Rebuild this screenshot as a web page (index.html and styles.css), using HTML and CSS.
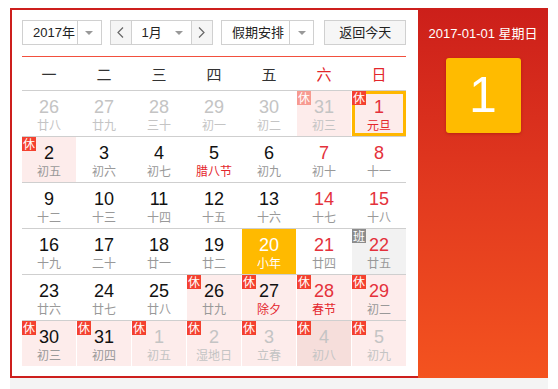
FILE: index.html
```html
<!DOCTYPE html>
<html lang="zh-CN">
<head>
<meta charset="utf-8">
<title>万年历</title>
<link rel="stylesheet" href="styles.css">
</head>
<body>
<div class="page">
  <div class="calendar">
    <div class="main">
      <div class="controls">
        <div class="select year">
          <span class="select-text">2017年</span>
          <span class="select-arrow"><i class="tri"></i></span>
        </div>
        <div class="month-group">
          <span class="nav-btn"><svg width="7" height="11" viewBox="0 0 7 11"><polyline points="6,0.5 1,5.5 6,10.5" fill="none" stroke="#666" stroke-width="1.2"/></svg></span>
          <div class="month-select">
            <span class="select-text">1月</span>
            <i class="tri"></i>
          </div>
          <span class="nav-btn"><svg width="7" height="11" viewBox="0 0 7 11"><polyline points="1,0.5 6,5.5 1,10.5" fill="none" stroke="#666" stroke-width="1.2"/></svg></span>
        </div>
        <div class="select holiday">
          <span class="select-text">假期安排</span>
          <span class="select-arrow"><i class="tri"></i></span>
        </div>
        <div class="today-btn">返回今天</div>
      </div>
      <div class="weekdays">
        <span>一</span><span>二</span><span>三</span><span>四</span><span>五</span><span class="wkend">六</span><span class="wkend">日</span>
      </div>
      <div class="weeks">
        <div class="week">
          <div class="day other"><span class="num">26</span><span class="lunar">廿八</span></div>
          <div class="day other"><span class="num">27</span><span class="lunar">廿九</span></div>
          <div class="day other"><span class="num">28</span><span class="lunar">三十</span></div>
          <div class="day other"><span class="num">29</span><span class="lunar">初一</span></div>
          <div class="day other"><span class="num">30</span><span class="lunar">初二</span></div>
          <div class="day other rest"><i class="badge faded">休</i><span class="num">31</span><span class="lunar">初三</span></div>
          <div class="day rest today red"><i class="badge">休</i><span class="num">1</span><span class="lunar fest">元旦</span></div>
        </div>
        <div class="week">
          <div class="day rest"><i class="badge">休</i><span class="num">2</span><span class="lunar">初五</span></div>
          <div class="day"><span class="num">3</span><span class="lunar">初六</span></div>
          <div class="day"><span class="num">4</span><span class="lunar">初七</span></div>
          <div class="day"><span class="num">5</span><span class="lunar fest">腊八节</span></div>
          <div class="day"><span class="num">6</span><span class="lunar">初九</span></div>
          <div class="day red"><span class="num">7</span><span class="lunar">初十</span></div>
          <div class="day red"><span class="num">8</span><span class="lunar">十一</span></div>
        </div>
        <div class="week">
          <div class="day"><span class="num">9</span><span class="lunar">十二</span></div>
          <div class="day"><span class="num">10</span><span class="lunar">十三</span></div>
          <div class="day"><span class="num">11</span><span class="lunar">十四</span></div>
          <div class="day"><span class="num">12</span><span class="lunar">十五</span></div>
          <div class="day"><span class="num">13</span><span class="lunar">十六</span></div>
          <div class="day red"><span class="num">14</span><span class="lunar">十七</span></div>
          <div class="day red"><span class="num">15</span><span class="lunar">十八</span></div>
        </div>
        <div class="week">
          <div class="day"><span class="num">16</span><span class="lunar">十九</span></div>
          <div class="day"><span class="num">17</span><span class="lunar">二十</span></div>
          <div class="day"><span class="num">18</span><span class="lunar">廿一</span></div>
          <div class="day"><span class="num">19</span><span class="lunar">廿二</span></div>
          <div class="day selected"><span class="num">20</span><span class="lunar">小年</span></div>
          <div class="day red"><span class="num">21</span><span class="lunar">廿四</span></div>
          <div class="day red work"><i class="badge gray">班</i><span class="num">22</span><span class="lunar">廿五</span></div>
        </div>
        <div class="week">
          <div class="day"><span class="num">23</span><span class="lunar">廿六</span></div>
          <div class="day"><span class="num">24</span><span class="lunar">廿七</span></div>
          <div class="day"><span class="num">25</span><span class="lunar">廿八</span></div>
          <div class="day rest"><i class="badge">休</i><span class="num">26</span><span class="lunar">廿九</span></div>
          <div class="day rest"><i class="badge">休</i><span class="num">27</span><span class="lunar fest">除夕</span></div>
          <div class="day rest red"><i class="badge">休</i><span class="num">28</span><span class="lunar fest">春节</span></div>
          <div class="day rest red"><i class="badge">休</i><span class="num">29</span><span class="lunar">初二</span></div>
        </div>
        <div class="week">
          <div class="day rest"><i class="badge">休</i><span class="num">30</span><span class="lunar">初三</span></div>
          <div class="day rest"><i class="badge">休</i><span class="num">31</span><span class="lunar">初四</span></div>
          <div class="day rest other"><i class="badge">休</i><span class="num">1</span><span class="lunar">初五</span></div>
          <div class="day rest other"><i class="badge">休</i><span class="num">2</span><span class="lunar">湿地日</span></div>
          <div class="day rest other"><i class="badge">休</i><span class="num">3</span><span class="lunar">立春</span></div>
          <div class="day rest other hover"><i class="badge">休</i><span class="num">4</span><span class="lunar">初八</span></div>
          <div class="day rest other"><i class="badge">休</i><span class="num">5</span><span class="lunar">初九</span></div>
        </div>
      </div>
    </div>
    <div class="side">
      <div class="side-date">2017-01-01 星期日</div>
      <div class="side-day">1</div>
    </div>
  </div>
  <div class="footer"></div>
</div>
</body>
</html>
```

FILE: styles.css
```css
* { box-sizing: border-box; }
body {
  margin: 0;
  background: #fff;
  font-family: "Liberation Sans", Arial, "Noto Sans CJK SC", sans-serif;
  color: #333;
}
.page {
  padding: 8px 0 0 10px;
  width: 548px;
}
.calendar {
  display: flex;
  width: 538px;
  height: 370px;
}
.main {
  width: 408px;
  height: 370px;
  border: 2px solid #cd1f1d;
  border-right: none;
  padding: 10px 12px 10px 10px;
}
.controls {
  display: flex;
  height: 25px;
  font-size: 13px;
}
.select {
  display: flex;
  height: 25px;
  border: 1px solid #d0d0d0;
  background: #fff;
  align-items: stretch;
}
.select-text {
  flex: 1;
  line-height: 23px;
  padding-left: 10px;
  color: #222;
}
.select-arrow {
  width: 24px;
  border-left: 1px solid #d0d0d0;
  display: flex;
  align-items: center;
  justify-content: center;
}
.tri {
  display: block;
  width: 0;
  height: 0;
  border-left: 4px solid transparent;
  border-right: 4px solid transparent;
  border-top: 4px solid #999;
}
.year { width: 80px; }
.month-group {
  margin-left: 8px;
  width: 104px;
  height: 25px;
  border: 1px solid #d0d0d0;
  display: flex;
}
.nav-btn {
  width: 21px;
  background: #f5f5f5;
  display: flex;
  align-items: center;
  justify-content: center;
}
.nav-btn:first-child { border-right: 1px solid #d0d0d0; }
.nav-btn:last-child { border-left: 1px solid #d0d0d0; }
.month-select {
  flex: 1;
  display: flex;
  align-items: center;
  padding-right: 8px;
}
.month-select .select-text { padding-left: 10px; }
.holiday { margin-left: 8px; width: 94px; }
.today-btn {
  margin-left: 10px;
  width: 82px;
  height: 25px;
  border: 1px solid #d0d0d0;
  background: #f6f6f6;
  text-align: center;
  line-height: 23px;
  color: #222;
}
.weekdays {
  margin-top: 11px;
  border-top: 1px solid #f2503e;
  border-bottom: 1px solid #cfcfcf;
  display: grid;
  grid-template-columns: repeat(7, 54px);
  column-gap: 1px;
  height: 35px;
  line-height: 33px;
  font-size: 15px;
  text-align: center;
  color: #333;
  font-family: "Noto Sans CJK SC", sans-serif;
}
.weekdays .wkend { color: #e3262b; }
.week {
  display: grid;
  grid-template-columns: repeat(7, 54px);
  column-gap: 1px;
  height: 46px;
  border-bottom: 1px solid #cfcfcf;
}
.week:last-child { height: 45px; border-bottom: none; }
.day {
  position: relative;
  height: 45px;
  text-align: center;
}
.num {
  display: block;
  margin-top: 6px;
  height: 20px;
  line-height: 20px;
  font-size: 18px;
  color: #111;
}
.lunar {
  display: block;
  height: 15px;
  line-height: 15px;
  font-size: 12px;
  color: #999;
  font-family: "Noto Sans CJK SC", sans-serif;
}
.red .num { color: #e4313b; }
.lunar.fest { color: #e4262d; }
.other .num, .other .lunar { color: #c4c4c4; }
.rest { background: #fdeceb; }
.hover { background: #f6dedb; }
.work { background: #f2f2f2; }
.today { box-shadow: inset 0 0 0 3px #ffb700; }
.selected { background: #ffba00; }
.selected .num, .selected .lunar { color: #fff; }
.badge {
  position: absolute;
  top: 0;
  left: 0;
  width: 14px;
  height: 14px;
  line-height: 14px;
  font-size: 12px;
  font-style: normal;
  color: #fff;
  background: #f4412f;
  text-align: center;
  font-family: "Noto Sans CJK SC", sans-serif;
}
.badge.faded { background: #f79a90; }
.badge.gray { background: #8c8c8c; }
.side {
  width: 130px;
  height: 370px;
  background: linear-gradient(to bottom, #cc1f1a 0%, #e23a1f 50%, #f4531f 100%);
  padding-top: 18px;
  display: flex;
  flex-direction: column;
  align-items: center;
}
.side-date {
  height: 16px;
  line-height: 16px;
  font-size: 13px;
  color: #fff;
}
.side-day {
  margin-top: 16px;
  width: 75px;
  height: 75px;
  border-radius: 3px;
  background: #ffbb00;
  box-shadow: 0 1px 3px rgba(120, 0, 0, 0.35);
  color: #fff;
  font-size: 50px;
  line-height: 75px;
  text-align: center;
}
.footer {
  width: 538px;
  height: 11px;
  background: #f4f4f4;
}
```
